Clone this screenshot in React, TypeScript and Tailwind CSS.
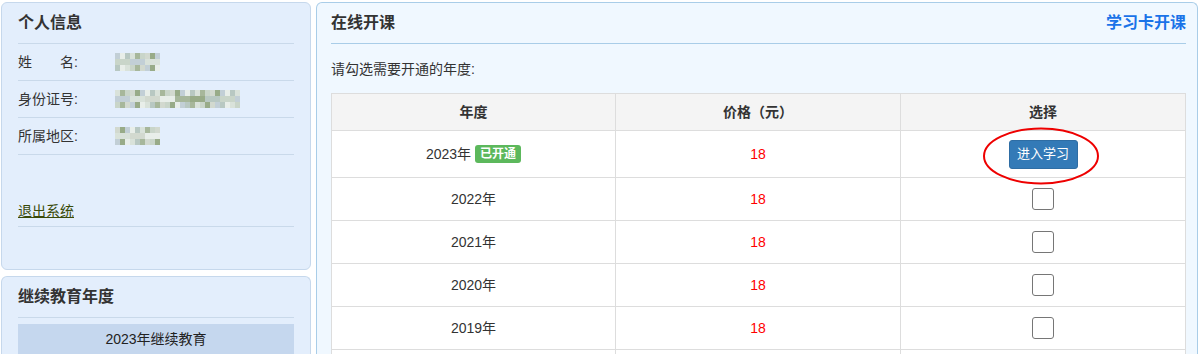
import React from 'react'

const FONT = { fontFamily: '"Liberation Sans", "Noto Sans CJK SC", sans-serif' }

const PALETTE = [
  'bg-[#c9d5c9]',
  'bg-[#a7b79b]',
  'bg-[#d9e2da]',
  'bg-[#b8c8c2]',
  'bg-[#e8eee9]',
  'bg-[#c2cfd6]',
  'bg-[#98ab88]',
  'bg-[#d2d9cf]',
]

// blurred personal data, drawn as a little mosaic
function Mosaic({ cols, seed }: { cols: number; seed: number }) {
  const rows = [0, 1, 2]
  return (
    <div className="flex flex-col">
      {rows.map((r) => (
        <div key={r} className="flex">
          {Array.from({ length: cols }).map((_, c) => (
            <div
              key={c}
              className={`w-[5px] h-[6px] ${PALETTE[(c * 7 + r * 3 + seed * 5 + ((c * r) % 3)) % PALETTE.length]}`}
            />
          ))}
        </div>
      ))}
    </div>
  )
}

function InfoRow({ label, cols, seed }: { label: React.ReactNode; cols: number; seed: number }) {
  return (
    <div className="flex items-center h-[37px] border-b border-[#c9d9ea]">
      <div className="w-[97px] text-[14px] text-[#333]">{label}</div>
      <Mosaic cols={cols} seed={seed} />
    </div>
  )
}

const YEARS = [2023, 2022, 2021, 2020, 2019, 2018]

export default function App() {
  return (
    <div className="flex gap-[5px] pl-[1px] pt-[2px] bg-white h-[354px] overflow-hidden" style={FONT}>
      {/* Left column */}
      <div className="w-[310px] shrink-0 flex flex-col gap-[6px]">
        <div className="h-[268px] rounded-[6px] border border-[#c6d8ec] bg-[#e3eefc] px-4">
          <div className="h-[41px] flex items-center border-b border-[#c9d9ea] text-[16px] font-bold text-[#333]">
            个人信息
          </div>
          <InfoRow label={<span>姓<span className="inline-block w-[28px]" />名:</span>} cols={9} seed={1} />
          <InfoRow label="身份证号:" cols={25} seed={2} />
          <InfoRow label="所属地区:" cols={9} seed={3} />
          <div className="h-[72px] flex items-end pb-[4px] border-b border-[#c9d9ea]">
            <a className="text-[14px] text-[#3a4a08] underline">退出系统</a>
          </div>
        </div>
        <div className="flex-1 rounded-t-[6px] border border-b-0 border-[#c6d8ec] bg-[#e3eefc] px-4">
          <div className="h-[41px] flex items-center border-b border-[#c9d9ea] text-[16px] font-bold text-[#333]">
            继续教育年度
          </div>
          <div className="mt-[6px] h-[30px] flex items-center justify-center bg-[#c5d7ee] text-[14px] text-[#222]">
            2023年继续教育
          </div>
        </div>
      </div>

      {/* Right panel */}
      <div className="w-[882px] shrink-0 rounded-t-[6px] border border-b-0 border-[#a9cde8] bg-[#f0f8ff] pl-[14px] pr-[11px]">
        <div className="h-[41px] flex items-center justify-between border-b border-[#a9cde8]">
          <span className="text-[16px] font-bold text-[#333]">在线开课</span>
          <span className="text-[16px] font-bold text-[#1a73e8]">学习卡开课</span>
        </div>
        <div className="h-[49px] flex items-center text-[14px] text-[#333] pt-[2px]">请勾选需要开通的年度:</div>
        <table className="w-full border-collapse bg-white text-[14px] text-[#333] table-fixed">
          <thead>
            <tr className="h-[37px] bg-[#f4f4f4]">
              <th className="border border-[#dddddd] font-bold w-[284px]">年度</th>
              <th className="border border-[#dddddd] font-bold w-[285px]">价格（元）</th>
              <th className="border border-[#dddddd] font-bold">选择</th>
            </tr>
          </thead>
          <tbody>
            {YEARS.map((y, i) => (
              <tr key={y} className={i === 0 ? 'h-[47px]' : 'h-[43px]'}>
                <td className="border border-[#dddddd] text-center">
                  {y}年
                  {i === 0 && (
                    <span className="ml-[4px] inline-block px-[5px] leading-[18px] rounded-[3px] bg-[#5cb85c] text-white text-[12px] font-bold align-[1px]">
                      已开通
                    </span>
                  )}
                </td>
                <td className="border border-[#dddddd] text-center text-[#ff0000]">18</td>
                <td className="border border-[#dddddd] text-center">
                  {i === 0 ? (
                    <div className="relative inline-block align-middle">
                      <button className="w-[69px] h-[29px] rounded-[3px] bg-[#337ab7] text-white text-[13px] border border-[#2e6da4]">
                        进入学习
                      </button>
                      <svg
                        className="absolute left-[-26px] top-[-13px] pointer-events-none"
                        width="118"
                        height="58"
                        viewBox="0 0 118 58"
                      >
                        <ellipse cx="58" cy="29" rx="57" ry="27.5" fill="none" stroke="#ee0000" strokeWidth="2" />
                      </svg>
                    </div>
                  ) : (
                    <span className="inline-block align-middle w-[22px] h-[22px] rounded-[3px] border border-[#767676] bg-white" />
                  )}
                </td>
              </tr>
            ))}
          </tbody>
        </table>
      </div>
    </div>
  )
}
